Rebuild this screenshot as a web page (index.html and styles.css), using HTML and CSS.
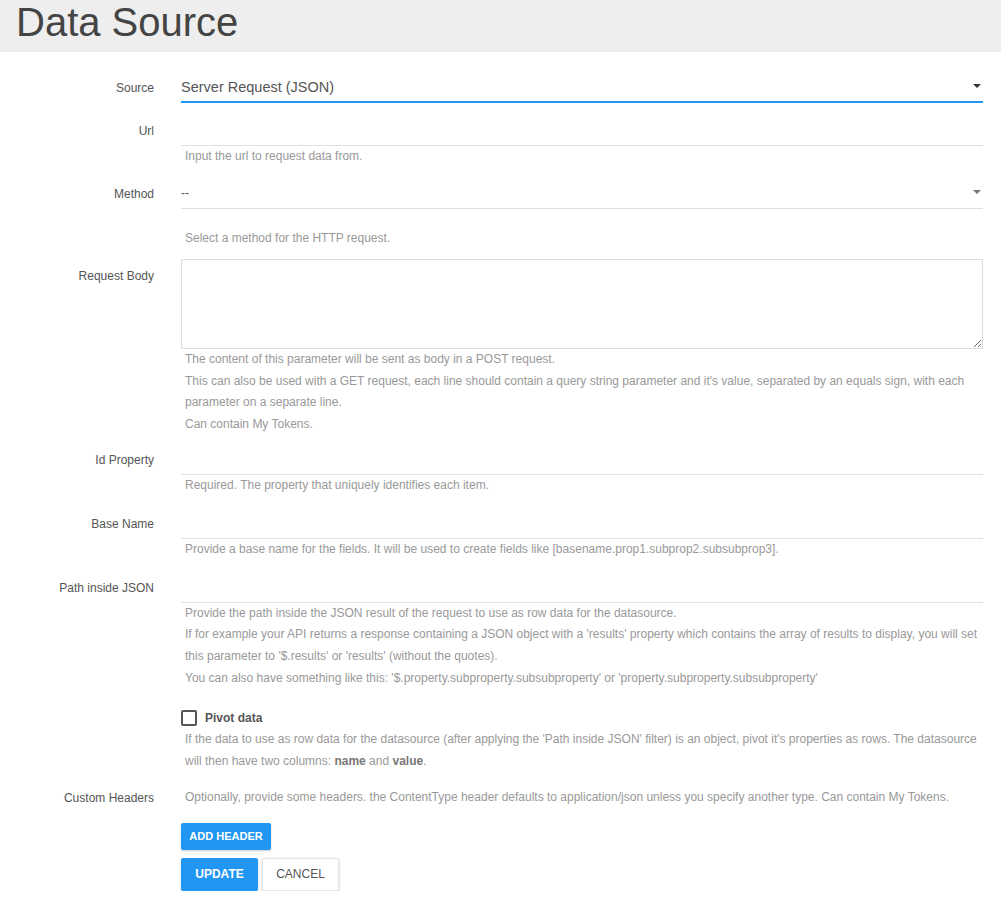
FILE: index.html
```html
<!DOCTYPE html>
<html lang="en">
<head>
<meta charset="utf-8">
<title>Data Source</title>
<link rel="stylesheet" href="styles.css">
</head>
<body>
<header class="title-bar">
  <h1 class="title">Data Source</h1>
</header>
<form class="form">
  <div class="row">
    <label class="label">Source</label>
    <div class="field">
      <div class="select select--active">
        <span class="select-value">Server Request (JSON)</span>
        <span class="caret caret--dark"></span>
      </div>
    </div>
  </div>

  <div class="row">
    <label class="label">Url</label>
    <div class="field">
      <div class="input"></div>
      <div class="help">Input the url to request data from.</div>
    </div>
  </div>

  <div class="row row--method">
    <label class="label">Method</label>
    <div class="field">
      <div class="select select--plain">
        <span class="select-value select-value--small">--</span>
        <span class="caret"></span>
      </div>
      <div class="help help--spaced">Select a method for the HTTP request.</div>
    </div>
  </div>

  <div class="row">
    <label class="label">Request Body</label>
    <div class="field">
      <textarea class="textarea"></textarea>
      <div class="help">
        <div>The content of this parameter will be sent as body in a POST request.</div>
        <div>This can also be used with a GET request, each line should contain a query string parameter and it's value, separated by an equals sign, with each parameter on a separate line.</div>
        <div>Can contain My Tokens.</div>
      </div>
    </div>
  </div>

  <div class="row row--tight">
    <label class="label">Id Property</label>
    <div class="field">
      <div class="input"></div>
      <div class="help">Required. The property that uniquely identifies each item.</div>
    </div>
  </div>

  <div class="row row--loose">
    <label class="label">Base Name</label>
    <div class="field">
      <div class="input"></div>
      <div class="help">Provide a base name for the fields. It will be used to create fields like [basename.prop1.subprop2.subsubprop3].</div>
    </div>
  </div>

  <div class="row">
    <label class="label">Path inside JSON</label>
    <div class="field">
      <div class="input"></div>
      <div class="help">
        <div>Provide the path inside the JSON result of the request to use as row data for the datasource.</div>
        <div>If for example your API returns a response containing a JSON object with a 'results' property which contains the array of results to display, you will set this parameter to '$.results' or 'results' (without the quotes).</div>
        <div>You can also have something like this: '$.property.subproperty.subsubproperty' or 'property.subproperty.subsubproperty'</div>
      </div>
    </div>
  </div>

  <div class="row row--check">
    <span class="label"></span>
    <div class="field">
      <label class="check">
        <span class="check-box"></span>
        <span class="check-label">Pivot data</span>
      </label>
      <div class="help">If the data to use as row data for the datasource (after applying the 'Path inside JSON' filter) is an object, pivot it's properties as rows. The datasource will then have two columns: <b>name</b> and <b>value</b>.</div>
    </div>
  </div>

  <div class="row row--headers">
    <label class="label label--text">Custom Headers</label>
    <div class="field">
      <div class="help">Optionally, provide some headers. the ContentType header defaults to application/json unless you specify another type. Can contain My Tokens.</div>
      <div class="actions actions--add">
        <button type="button" class="btn btn--primary btn--small">ADD HEADER</button>
      </div>
      <div class="actions">
        <button type="button" class="btn btn--primary">UPDATE</button>
        <button type="button" class="btn btn--default">CANCEL</button>
      </div>
    </div>
  </div>
</form>
</body>
</html>
```

FILE: styles.css
```css
* { box-sizing: border-box; }

html, body {
  margin: 0;
  padding: 0;
  background: #fff;
  font-family: "Liberation Sans", Arial, sans-serif;
  color: #555;
}

.title-bar {
  background: #eeeeee;
  height: 52px;
  padding-left: 16px;
}

.title {
  margin: 0;
  font-size: 40px;
  font-weight: normal;
  line-height: 44px;
  color: #444;
}

.form {
  display: flex;
  flex-direction: column;
  gap: 10px;
  padding: 19px 18px 0 0;
}

.row {
  display: grid;
  grid-template-columns: 154px 1fr;
  column-gap: 27px;
}

.row--method { margin-top: -1px; }
.row--tight { margin-top: -3px; }
.row--loose { margin-top: 1px; }
.row--check { margin-top: 8px; }
.row--headers { margin-top: 5px; }

.label {
  font-size: 12px;
  line-height: 32px;
  padding-top: 1px;
  text-align: right;
  color: #555;
}

.label--text {
  line-height: 22px;
  padding-top: 0;
}

.field {
  min-width: 0;
  display: flex;
  flex-direction: column;
}

.select {
  height: 32px;
  display: flex;
  align-items: center;
  justify-content: space-between;
  border-bottom: 1px solid #e0e0e0;
  padding-right: 2px;
}

.select--active {
  border-bottom: 2px solid #2196f3;
}

.select-value {
  font-size: 14.5px;
  color: #555;
  padding-top: 1px;
}

.select-value--small {
  font-size: 12px;
  color: #555;
}

.caret {
  width: 0;
  height: 0;
  border-left: 4px solid transparent;
  border-right: 4px solid transparent;
  border-top: 4px solid #777;
}

.caret--dark { border-top-color: #333; }

.input {
  height: 32px;
  border-bottom: 1px solid #e0e0e0;
}

.textarea {
  display: block;
  width: 100%;
  height: 90px;
  border: 1px solid #dddddd;
  border-radius: 0;
  margin: 0;
  resize: vertical;
  font-family: inherit;
}

.help {
  font-size: 12px;
  line-height: 21.6px;
  color: #999;
  padding-left: 4px;
}

.help b {
  font-weight: bold;
  color: #777;
}

.help--spaced { margin-top: 19px; }

.check {
  display: flex;
  align-items: center;
  gap: 8px;
  height: 22px;
}

.check-box {
  width: 16px;
  height: 16px;
  border: 2px solid #555;
  border-radius: 2px;
}

.check-label {
  font-size: 12px;
  font-weight: bold;
  color: #555;
}

.actions {
  display: flex;
  gap: 4px;
  margin-top: 8px;
}

.actions--add { margin-top: 14px; }

.btn {
  font-family: inherit;
  border: none;
  border-radius: 2px;
  width: 77px;
  height: 33px;
  font-size: 12px;
  padding: 0;
  cursor: pointer;
}

.btn--primary {
  background: #2196f3;
  color: #fff;
  font-weight: bold;
  box-shadow: 0 1px 2px rgba(0, 0, 0, 0.2);
}

.btn--small {
  width: 90px;
  height: 27px;
  font-size: 11px;
}

.btn--default {
  background: #fff;
  color: #555;
  border: 1px solid #e6e6e6;
  box-shadow: 0 1px 3px rgba(0, 0, 0, 0.2);
}
```
